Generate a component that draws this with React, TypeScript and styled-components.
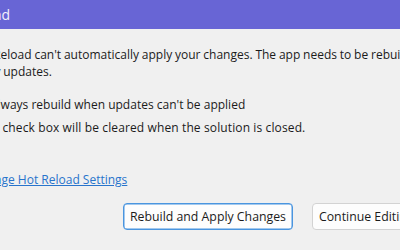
import styled, { createGlobalStyle } from 'styled-components';

const GlobalStyle = createGlobalStyle`
  html, body {
    margin: 0;
    padding: 0;
    background: #f0f0f0;
    overflow: hidden;
  }
  body {
    font-family: 'Open Sans', 'Liberation Sans', sans-serif;
  }
`;

const App = () => {
  return (
    <>
      <GlobalStyle />
      <Dialog>
        <TitleBar>
          <TitleText>Hot Reload</TitleText>
        </TitleBar>
        <Body>
          <Message>
            Hot Reload can't automatically apply your changes. The app needs
            to be rebuilt to apply updates.
          </Message>
          <CheckRow>
            <CheckBox type="checkbox" />
            Always rebuild when updates can't be applied
          </CheckRow>
          <Note>
            <NoteTag>This</NoteTag> check box will be cleared when the solution
            is closed.
          </Note>
          <SettingsLink href="#">Manage Hot Reload Settings</SettingsLink>
          <ButtonRow>
            <Button primary>Rebuild and Apply Changes</Button>
            <Button>Continue Editing</Button>
          </ButtonRow>
        </Body>
      </Dialog>
    </>
  );
};

const Dialog = styled.div`
  width: 490px;
  margin-left: -42px;
  height: 250px;
  display: flex;
  flex-direction: column;
  color: #1b1b1b;
`;

const TitleBar = styled.div`
  height: 29px;
  background: #6865d5;
  display: flex;
  align-items: center;
`;

const TitleText = styled.span`
  margin-left: -20px;
  color: #f3f2fc;
  font-size: 14px;
  white-space: nowrap;
`;

const Body = styled.div`
  display: flex;
  flex-direction: column;
  padding: 17px 12px 0 12px;
  font-size: 12px;
  line-height: 17px;
`;

const Message = styled.p`
  margin: 0;
  width: 476px;
  word-spacing: -0.3px;
`;

const CheckRow = styled.label`
  display: flex;
  align-items: center;
  gap: 7px;
  margin-top: 16px;
  white-space: nowrap;
`;

const CheckBox = styled.input`
  width: 13px;
  height: 13px;
  margin: 0;
`;

const Note = styled.div`
  margin-top: 6px;
  padding-left: 6px;
  white-space: nowrap;
  letter-spacing: 0.12px;
`;

const NoteTag = styled.span`
  color: #3a86d8;
`;

const SettingsLink = styled.a`
  margin-top: 35px;
  color: #2874cc;
  text-decoration: underline;
  align-self: flex-start;
`;

const ButtonRow = styled.div`
  display: flex;
  gap: 19px;
  margin-top: 15px;
  padding-left: 153px;
`;

const Button = styled.button<{ primary?: boolean }>`
  height: 27px;
  padding: 0 6px;
  font-family: inherit;
  font-size: 12.3px;
  color: #1b1b1b;
  background: #fdfdfd;
  border-radius: 4px;
  border: 1px solid ${({ primary }) => (primary ? '#4a95df' : '#d3d3d3')};
  box-shadow: ${({ primary }) => (primary ? 'inset 0 0 0 0.5px #4a95df' : 'none')};
  white-space: nowrap;
`;

export default App;
